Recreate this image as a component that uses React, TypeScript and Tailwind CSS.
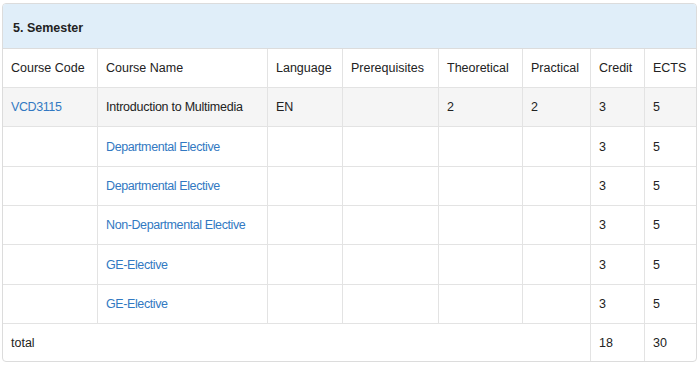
import React from "react";

type Course = {
  code?: string;
  name: string;
  nameIsLink: boolean;
  language?: string;
  theoretical?: string;
  practical?: string;
  credit: string;
  ects: string;
};

const courses: Course[] = [
  {
    code: "VCD3115",
    name: "Introduction to Multimedia",
    nameIsLink: false,
    language: "EN",
    theoretical: "2",
    practical: "2",
    credit: "3",
    ects: "5",
  },
  { name: "Departmental Elective", nameIsLink: true, credit: "3", ects: "5" },
  { name: "Departmental Elective", nameIsLink: true, credit: "3", ects: "5" },
  { name: "Non-Departmental Elective", nameIsLink: true, credit: "3", ects: "5" },
  { name: "GE-Elective", nameIsLink: true, credit: "3", ects: "5" },
  { name: "GE-Elective", nameIsLink: true, credit: "3", ects: "5" },
];

// row heights (incl. bottom border) so the grid lines land where the screenshot has them
const rowHeights = ["h-[39px]", "h-[40px]", "h-[39px]", "h-[39px]", "h-[40px]", "h-[39px]"];

const headers = [
  "Course Code",
  "Course Name",
  "Language",
  "Prerequisites",
  "Theoretical",
  "Practical",
  "Credit",
  "ECTS",
];

const cell =
  "whitespace-nowrap border-b border-r border-[#e3e3e3] px-[8px] py-0 align-middle font-normal text-left";
const lastCell =
  "whitespace-nowrap border-b border-[#e3e3e3] px-[8px] py-0 align-middle font-normal text-left";
const linkClass = "text-[#3279c2] no-underline tracking-[-0.4px]";

export default function App() {
  return (
    <div
      className="min-h-[365px] bg-white pl-[2px] pt-[3px] text-[12.5px] leading-[18px] text-[#222]"
      style={{ fontFamily: '"Liberation Sans", Arial, Helvetica, sans-serif' }}
    >
      <div className="w-[695px] overflow-hidden rounded-[4px] border border-[#dcdcdc]">
        <div className="flex h-[45px] items-center border-b border-[#dcdcdc] bg-[#e0eef9] pl-[10px] pt-[3px] font-bold text-[#222]">
          5. Semester
        </div>
        <table className="w-full table-fixed border-separate border-spacing-0">
          <colgroup>
            <col className="w-[95px]" />
            <col className="w-[170px]" />
            <col className="w-[75px]" />
            <col className="w-[96px]" />
            <col className="w-[84px]" />
            <col className="w-[68px]" />
            <col className="w-[54px]" />
            <col className="w-[51px]" />
          </colgroup>
          <thead>
            <tr className="h-[39px]">
              {headers.map((h, i) => (
                <th key={h} className={i === headers.length - 1 ? lastCell : cell}>
                  {h}
                </th>
              ))}
            </tr>
          </thead>
          <tbody>
            {courses.map((c, i) => (
              <tr key={i} className={`${rowHeights[i]} ${i === 0 ? "bg-[#f5f5f5]" : "bg-white"}`}>
                <td className={cell}>{c.code ? <a className={linkClass}>{c.code}</a> : null}</td>
                <td className={cell}>
                  {c.nameIsLink ? (
                    <a className={linkClass}>{c.name}</a>
                  ) : (
                    <span className="tracking-[-0.25px]">{c.name}</span>
                  )}
                </td>
                <td className={cell}>{c.language}</td>
                <td className={cell}></td>
                <td className={cell}>{c.theoretical}</td>
                <td className={cell}>{c.practical}</td>
                <td className={cell}>{c.credit}</td>
                <td className={lastCell}>{c.ects}</td>
              </tr>
            ))}
            <tr className="h-[37px]">
              <td colSpan={6} className="border-r border-[#e3e3e3] px-[8px] align-middle">
                total
              </td>
              <td className="border-r border-[#e3e3e3] px-[8px] align-middle">18</td>
              <td className="px-[8px] align-middle">30</td>
            </tr>
          </tbody>
        </table>
      </div>
    </div>
  );
}
